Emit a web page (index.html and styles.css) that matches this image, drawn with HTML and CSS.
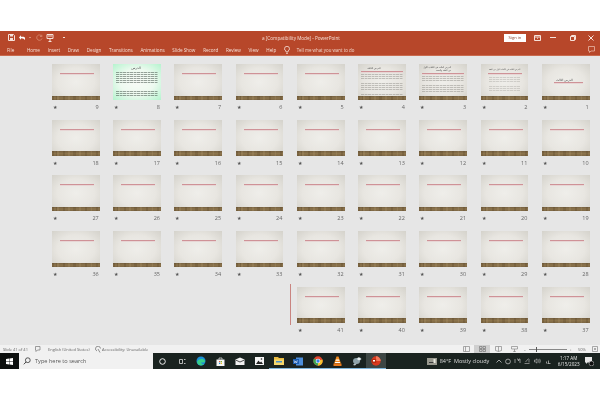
FILE: index.html
```html
<!DOCTYPE html>
<html lang="en">
<head>
<meta charset="utf-8">
<title>PowerPoint</title>
<link rel="stylesheet" href="styles.css">
</head>
<body>
<div class="screen">
  <header class="titlebar">
    <div class="qat">
      <svg width="7" height="7" viewBox="0 0 7 7"><path d="M.5.500h5l1 1v5h-6z" fill="none" stroke="#f6e2da"/><path d="M2 .5h3v2H2zM2 4h3v2.500H2z" fill="#f6e2da"/></svg>
      <svg width="8" height="7" viewBox="0 0 8 7"><path d="M1 3.500 3 1.300v1.400h2.400Q7.400 2.700 7 6 6 4.200 3 4.300v1.400z" fill="#fff"/></svg>
      <span class="caret"></span>
      <svg width="7" height="7" viewBox="0 0 7 7"><path d="M5.800 2.300A2.700 2.700 0 1 0 6 4.500M5.800.7v1.800H4" fill="none" stroke="#d98d74" stroke-width=".8"/></svg>
      <svg width="8" height="8" viewBox="0 0 8 8"><path d="M1 .5h6v4H1zM4 4.500v3M2.500 7.500h3" fill="none" stroke="#f6e2da"/><path d="M2 1.500h4v1H2z" fill="#f6e2da"/></svg>
      <span class="caret caret-more"></span>
    </div>
    <div class="doc-title">a ]Compatibility Mode] - PowerPoint</div>
    <div class="win">
      <span class="signin">Sign in</span>
      <svg width="7" height="6" viewBox="0 0 7 6"><path d="M.5.500h6v5h-6zM.5 2h6M3 3.200h1" fill="none" stroke="#f6e2da"/></svg>
      <svg width="6" height="1" viewBox="0 0 6 1"><path d="M0 .5h6" stroke="#f6e2da"/></svg>
      <svg width="6" height="6" viewBox="0 0 6 6"><path d="M.5 1.500h4v4h-4zM1.500 1.500v-1h4v4h-1" fill="none" stroke="#f6e2da"/></svg>
      <svg width="6" height="6" viewBox="0 0 6 6"><path d="M.5.500l5 5M5.500.500l-5 5" stroke="#f6e2da"/></svg>
    </div>
  </header>
  <nav class="tabs">
    <span>File</span><span>Home</span><span>Insert</span><span>Draw</span><span>Design</span><span>Transitions</span><span>Animations</span><span>Slide Show</span><span>Record</span><span>Review</span><span>View</span><span>Help</span>
    <svg class="bulb" width="6" height="8" viewBox="0 0 6 8"><path d="M2 6V5Q.5 4.200.5 2.800a2.500 2.500 0 0 1 5 0Q5.500 4.200 4 5v1zM2.200 7.500h1.600" fill="none" stroke="#f6e2da" stroke-width=".8"/></svg>
    <span class="tell">Tell me what you want to do</span>
    <svg class="comment" width="7" height="7" viewBox="0 0 7 7"><path d="M.5.500h6v4.500H3L1.500 6.500V5h-1z" fill="none" stroke="#e9b6a4" stroke-width=".8"/></svg>
  </nav>
  <main class="sorter">
    <div class="grid">
      <div class="cell"><div class="thumb"><b class="s1-title">الدرس الثالث</b><i class="rule rule-s1"></i><i class="band"></i></div><div class="meta"><em>★</em><span>1</span></div></div>
      <div class="cell"><div class="thumb"><b class="s2-title">الدرس الثالث في الكتاب الأول من الفقه</b><i class="rule rule-s2"></i><i class="lines lines-s2"></i><i class="band"></i></div><div class="meta"><em>★</em><span>2</span></div></div>
      <div class="cell"><div class="thumb"><b class="s3-title">الدرس الثالث في الكتاب الأول<br>من الفقه والسنة</b><i class="rule rule-s3"></i><i class="lines lines-s3"></i><i class="band"></i></div><div class="meta"><em>★</em><span>3</span></div></div>
      <div class="cell"><div class="thumb"><b class="s4-title">الدرس الثالث</b><i class="rule rule-s4"></i><i class="lines lines-s4"></i><i class="band"></i></div><div class="meta"><em>★</em><span>4</span></div></div>
      <div class="cell"><div class="thumb"><i class="rule"></i><i class="band"></i></div><div class="meta"><em>★</em><span>5</span></div></div>
      <div class="cell"><div class="thumb"><i class="rule"></i><i class="band"></i></div><div class="meta"><em>★</em><span>6</span></div></div>
      <div class="cell"><div class="thumb"><i class="rule"></i><i class="band"></i></div><div class="meta"><em>★</em><span>7</span></div></div>
      <div class="cell"><div class="thumb thumb-green"><b class="s8-title">الدرس</b><i class="lines lines-s8"></i></div><div class="meta"><em>★</em><span>8</span></div></div>
      <div class="cell"><div class="thumb"><i class="rule"></i><i class="band"></i></div><div class="meta"><em>★</em><span>9</span></div></div>
      <div class="cell"><div class="thumb"><i class="rule"></i><i class="band"></i></div><div class="meta"><em>★</em><span>10</span></div></div>
      <div class="cell"><div class="thumb"><i class="rule"></i><i class="band"></i></div><div class="meta"><em>★</em><span>11</span></div></div>
      <div class="cell"><div class="thumb"><i class="rule"></i><i class="band"></i></div><div class="meta"><em>★</em><span>12</span></div></div>
      <div class="cell"><div class="thumb"><i class="rule"></i><i class="band"></i></div><div class="meta"><em>★</em><span>13</span></div></div>
      <div class="cell"><div class="thumb"><i class="rule"></i><i class="band"></i></div><div class="meta"><em>★</em><span>14</span></div></div>
      <div class="cell"><div class="thumb"><i class="rule"></i><i class="band"></i></div><div class="meta"><em>★</em><span>15</span></div></div>
      <div class="cell"><div class="thumb"><i class="rule"></i><i class="band"></i></div><div class="meta"><em>★</em><span>16</span></div></div>
      <div class="cell"><div class="thumb"><i class="rule"></i><i class="band"></i></div><div class="meta"><em>★</em><span>17</span></div></div>
      <div class="cell"><div class="thumb"><i class="rule"></i><i class="band"></i></div><div class="meta"><em>★</em><span>18</span></div></div>
      <div class="cell"><div class="thumb"><i class="rule"></i><i class="band"></i></div><div class="meta"><em>★</em><span>19</span></div></div>
      <div class="cell"><div class="thumb"><i class="rule"></i><i class="band"></i></div><div class="meta"><em>★</em><span>20</span></div></div>
      <div class="cell"><div class="thumb"><i class="rule"></i><i class="band"></i></div><div class="meta"><em>★</em><span>21</span></div></div>
      <div class="cell"><div class="thumb"><i class="rule"></i><i class="band"></i></div><div class="meta"><em>★</em><span>22</span></div></div>
      <div class="cell"><div class="thumb"><i class="rule"></i><i class="band"></i></div><div class="meta"><em>★</em><span>23</span></div></div>
      <div class="cell"><div class="thumb"><i class="rule"></i><i class="band"></i></div><div class="meta"><em>★</em><span>24</span></div></div>
      <div class="cell"><div class="thumb"><i class="rule"></i><i class="band"></i></div><div class="meta"><em>★</em><span>25</span></div></div>
      <div class="cell"><div class="thumb"><i class="rule"></i><i class="band"></i></div><div class="meta"><em>★</em><span>26</span></div></div>
      <div class="cell"><div class="thumb"><i class="rule"></i><i class="band"></i></div><div class="meta"><em>★</em><span>27</span></div></div>
      <div class="cell"><div class="thumb"><i class="rule"></i><i class="band"></i></div><div class="meta"><em>★</em><span>28</span></div></div>
      <div class="cell"><div class="thumb"><i class="rule"></i><i class="band"></i></div><div class="meta"><em>★</em><span>29</span></div></div>
      <div class="cell"><div class="thumb"><i class="rule"></i><i class="band"></i></div><div class="meta"><em>★</em><span>30</span></div></div>
      <div class="cell"><div class="thumb"><i class="rule"></i><i class="band"></i></div><div class="meta"><em>★</em><span>31</span></div></div>
      <div class="cell"><div class="thumb"><i class="rule"></i><i class="band"></i></div><div class="meta"><em>★</em><span>32</span></div></div>
      <div class="cell"><div class="thumb"><i class="rule"></i><i class="band"></i></div><div class="meta"><em>★</em><span>33</span></div></div>
      <div class="cell"><div class="thumb"><i class="rule"></i><i class="band"></i></div><div class="meta"><em>★</em><span>34</span></div></div>
      <div class="cell"><div class="thumb"><i class="rule"></i><i class="band"></i></div><div class="meta"><em>★</em><span>35</span></div></div>
      <div class="cell"><div class="thumb"><i class="rule"></i><i class="band"></i></div><div class="meta"><em>★</em><span>36</span></div></div>
      <div class="cell"><div class="thumb"><i class="rule"></i><i class="band"></i></div><div class="meta"><em>★</em><span>37</span></div></div>
      <div class="cell"><div class="thumb"><i class="rule"></i><i class="band"></i></div><div class="meta"><em>★</em><span>38</span></div></div>
      <div class="cell"><div class="thumb"><i class="rule"></i><i class="band"></i></div><div class="meta"><em>★</em><span>39</span></div></div>
      <div class="cell"><div class="thumb"><i class="rule"></i><i class="band"></i></div><div class="meta"><em>★</em><span>40</span></div></div>
      <div class="cell"><i class="insert-mark"></i><div class="thumb"><i class="rule"></i><i class="band"></i></div><div class="meta"><em>★</em><span>41</span></div></div>
    </div>
  </main>
  <footer class="status">
    <span class="st-slide">Slide 41 of 41</span>
    <svg class="st-notes" width="7" height="6" viewBox="0 0 7 6"><path d="M.5.500h4.500v3.500H2.500L1 5.500V4H.5z" fill="none" stroke="#777" stroke-width=".7"/></svg>
    <span class="st-lang">English (United States)</span>
    <svg class="st-acc" width="6" height="7" viewBox="0 0 6 7"><path d="M5.500 2.500A2.500 2.500 0 1 0 2 5M3 3l2 3.500" fill="none" stroke="#666" stroke-width=".7"/></svg>
    <span class="st-acc-text">Accessibility: Unavailable</span>
    <div class="views">
      <span class="view"><svg width="7" height="6" viewBox="0 0 7 6"><path d="M.5.500h6v5h-6zM2.500.5v5" fill="none" stroke="#888" stroke-width=".7"/></svg></span>
      <span class="view view-on"><svg width="7" height="6" viewBox="0 0 7 6"><path d="M.5.500h2.500v2H.5zM4 .5h2.500v2H4zM.5 3.500h2.500v2H.5zM4 3.500h2.500v2H4z" fill="none" stroke="#777" stroke-width=".7"/></svg></span>
      <span class="view"><svg width="7" height="6" viewBox="0 0 7 6"><path d="M.5.500h6M3.500.5v5M.5.500v4l3 1 3-1v-4" fill="none" stroke="#888" stroke-width=".7"/></svg></span>
      <span class="view"><svg width="7" height="6" viewBox="0 0 7 6"><path d="M.5.500h6v2.500h-6zM3.500 3v3M2 5.700h3" fill="none" stroke="#888" stroke-width=".7"/></svg></span>
    </div>
    <div class="zoom">
      <span class="z-btn">-</span>
      <span class="z-track"><i class="z-thumb"></i></span>
      <span class="z-btn">+</span>
      <span class="z-pct">50%</span>
      <svg width="6" height="6" viewBox="0 0 6 6"><path d="M.5.500h5v5h-5z" fill="none" stroke="#888" stroke-width=".7"/><path d="M2 2h2v2H2z" fill="#aaa"/></svg>
    </div>
  </footer>
  <div class="taskbar">
    <div class="start"><svg width="7" height="7" viewBox="0 0 7 7"><path d="M0 .9 3.200.4v2.900H0zM3.600.4 7 0v3.300H3.600zM0 3.700h3.200v2.900L0 6.100zM3.600 3.700H7V7l-3.400-.5z" fill="#fff"/></svg></div>
    <div class="search">
      <svg width="8" height="8" viewBox="0 0 8 8"><circle cx="4.800" cy="3.200" r="2.400" fill="none" stroke="#333" stroke-width=".8"/><path d="M3 5 .8 7.300" stroke="#333" stroke-width=".9"/></svg>
      <span>Type here to search</span>
    </div>
    <div class="apps">
      <span class="app"><svg width="7" height="7" viewBox="0 0 7 7"><circle cx="3.500" cy="3.500" r="2.800" fill="none" stroke="#fff" stroke-width=".9"/></svg></span>
      <span class="app"><svg width="8" height="7" viewBox="0 0 8 7"><path d="M1.500 1.500h3v4h-3zM6 1.500h1.500M6 5.500h1.500" fill="none" stroke="#ddd" stroke-width=".8"/></svg></span>
      <span class="app"><svg width="10" height="10" viewBox="0 0 10 10"><circle cx="5" cy="5" r="4.500" fill="#1b8fd6"/><path d="M1 6C2 2.500 7.500 2 9 4.800 9.500 6.500 6.500 7 5 6 5.500 8 7 8.800 8.500 8 6 10.500 1.500 9.500 1 6z" fill="#38d08a"/></svg></span>
      <span class="app"><svg width="9" height="9" viewBox="0 0 9 9"><path d="M.5 2.500h8V9h-8z" fill="#f4f4f4"/><path d="M3 2.500V1h3v1.500" fill="none" stroke="#eee" stroke-width=".7"/><path d="M3 4h1.300v1.300H3z" fill="#e8543a"/><path d="M4.700 4H6v1.300H4.700z" fill="#7cb82f"/><path d="M3 5.700h1.300V7H3z" fill="#1f9be0"/><path d="M4.700 5.700H6V7H4.700z" fill="#f6b91c"/></svg></span>
      <span class="app"><svg width="10" height="8" viewBox="0 0 10 8"><path d="M.5 2.500 5 .5l4.500 2V8h-9z" fill="#f2f2f2"/><path d="M1 3.200 5 5l4-1.800" fill="none" stroke="#222" stroke-width=".8"/></svg></span>
      <span class="app"><svg width="9" height="8" viewBox="0 0 9 8"><path d="M0 0h9v8H0z" fill="#f4f4f4"/><path d="M1 7l2.500-3.500L5 5.500l1.200-1L8 7z" fill="#222"/><circle cx="6.500" cy="2" r=".8" fill="#222"/></svg></span>
      <span class="app app-run"><svg width="10" height="8" viewBox="0 0 10 8"><path d="M0 0h4l1 1h5v7H0z" fill="#e8b93f"/><path d="M0 2.500h10V8H0z" fill="#f6d76a"/><path d="M2 4h6v1.500H2z" fill="#4a90c8"/></svg></span>
      <span class="app app-run"><svg width="10" height="9" viewBox="0 0 10 9"><path d="M3 .5h7v8H3z" fill="#4d8fdc"/><path d="M0 2h6v5H0z" fill="#1b5cb0"/><path d="M1 3.200l.8 2.800.9-2 .9 2 .8-2.800" fill="none" stroke="#fff" stroke-width=".5"/></svg></span>
      <span class="app app-run"><svg width="10" height="10" viewBox="0 0 10 10"><circle cx="5" cy="5" r="4.700" fill="#e3462f"/><path d="M5 5 9.400 3.400A4.700 4.700 0 0 1 5 9.700z" fill="#f5c22d"/><path d="M5 5 5 9.700A4.700 4.700 0 0 1 1 2.600z" fill="#3aa655"/><circle cx="5" cy="5" r="2.300" fill="#fff"/><circle cx="5" cy="5" r="1.700" fill="#3b82e0"/></svg></span>
      <span class="app app-run"><svg width="9" height="10" viewBox="0 0 9 10"><path d="M3.500.5h2L8 7.500H1z" fill="#f28a1c"/><path d="M3 3.500h3l.5 1.300h-4zM2.200 6h4.600l.4 1H1.800z" fill="#fff"/><path d="M.5 7.500h8V10h-8z" fill="#e8791a"/></svg></span>
      <span class="app app-run"><svg width="10" height="10" viewBox="0 0 10 10"><path d="M1 9 8 1.500 9.500 3 3 9.500z" fill="#b8c4c8"/><ellipse cx="4.500" cy="5" rx="3.500" ry="3" fill="#8fa3aa"/><circle cx="6.800" cy="2.800" r="1.500" fill="#e9eff1"/></svg></span>
      <span class="app app-run app-active"><svg width="10" height="10" viewBox="0 0 10 10"><circle cx="5" cy="5" r="4.700" fill="#d8391f"/><path d="M5 5V.3A4.700 4.700 0 0 1 9.700 5z" fill="#f4785a"/><path d="M.8 3h4.400v4H.8z" fill="#b72c12"/><path d="M2 4h2v1.600H2z" fill="#fff"/></svg></span>
    </div>
    <div class="tray">
      <svg class="tr-weather" width="10" height="7" viewBox="0 0 10 7"><path d="M0 0h10v7H0z" fill="#9a9a90"/><path d="M2 4.500h6" stroke="#3a3a3a"/><path d="M6.500 1h2v4h-2z" fill="#e9e9e0"/></svg>
      <span class="tr-text">84°F&nbsp; Mostly cloudy</span>
      <svg class="tr-up" width="6" height="4" viewBox="0 0 6 4"><path d="M.5 3.500 3 1l2.500 2.500" fill="none" stroke="#ddd" stroke-width=".7"/></svg>
      <svg width="6" height="7" viewBox="0 0 6 7"><circle cx="3" cy="3.500" r="2.400" fill="none" stroke="#bbb" stroke-width=".8"/></svg>
      <svg width="7" height="6" viewBox="0 0 7 6"><path d="M1 5V1M3 1h1l.5 2 .5-2h1v4" fill="none" stroke="#bbb" stroke-width=".7"/></svg>
      <svg width="6" height="6" viewBox="0 0 6 6"><path d="M.5 5.500h5M1.500 4 4.500.5M5 1v3.500" fill="none" stroke="#aaa" stroke-width=".7"/></svg>
      <svg class="tr-vol" width="7" height="6" viewBox="0 0 7 6"><path d="M.5 2h1.200L3 .8v4.400L1.700 4H.5zM4.500 1.500q1 1.500 0 3M5.600.8q1.600 2.200 0 4.400" fill="none" stroke="#ccc" stroke-width=".6"/></svg>
      <svg class="tr-net" width="5" height="5" viewBox="0 0 5 5"><path d="M.5 4.500v-2M2.500 4.500V1.500M4.500 4.500h-3" fill="none" stroke="#ccc" stroke-width=".7"/></svg>
      <div class="clock"><span>1:17 AM</span><span>6/15/2023</span></div>
      <span class="notify"><svg width="9" height="9" viewBox="0 0 9 9"><path d="M0 0h7v5.500H2.500L1 7V5.500H0z" fill="#e6e6e6"/><circle cx="6.500" cy="6.500" r="2.400" fill="#111" stroke="#ddd" stroke-width=".5"/></svg></span>
    </div>
  </div>
</div>
</body>
</html>
```
FILE: styles.css
```css
* { box-sizing: border-box; }
html, body { margin: 0; background: #fff; }
svg { display: block; flex: none; }
.screen {
  width: 600px; height: 400px; padding: 31px 0; overflow: hidden;
  display: flex; flex-direction: column;
  font-family: "Open Sans", "Liberation Sans", sans-serif;
  filter: blur(.45px);
}

/* title + tabs */
.titlebar {
  height: 13px; flex: none; background: #b7472a; color: #f6dfd6;
  display: grid; grid-template-columns: 1fr auto 1fr; align-items: center;
  padding: 0 6px 0 8px; font-size: 4.650px;
}
.qat { display: flex; align-items: center; gap: 3px; }
.caret { width: 2px; height: 1px; background: #d98d74; margin-right: 2px; }
.caret-more { margin-left: 6px; background: #f6dfd6; }
.doc-title { white-space: nowrap; }
.win { display: flex; justify-content: flex-end; align-items: center; }
.signin {
  width: 22px; height: 8px; background: #fff; color: #8a4a38; font-size: 4.200px;
  display: flex; align-items: center; justify-content: center; margin-right: 8px;
}
.win svg:nth-of-type(1) { margin-right: 9px; }
.win svg:nth-of-type(2) { margin-right: 14px; }
.win svg:nth-of-type(3) { margin-right: 12px; }
.tabs {
  height: 12px; flex: none; background: #b7472a; color: #f6dfd6;
  display: flex; align-items: center; gap: 7.700px;
  padding: 0 5px 0 7px; font-size: 4.600px; white-space: nowrap;
  border-bottom: 1px solid #c96a4e;
}
.tabs span:first-child { margin-right: 5px; }
.bulb { margin-right: -1px; }
.tell { font-size: 4.400px; color: #f2d4c8; }
.comment { margin-left: auto; }

/* slide sorter */
.sorter { flex: 1; min-height: 0; background: #e6e6e6; padding: 8px 0 0 52px; }
.grid {
  direction: rtl;
  display: grid;
  width: max-content;
  grid-template-columns: repeat(9, 47.700px);
  grid-auto-rows: 55.700px;
  column-gap: 13.550px;
}
.cell { position: relative; direction: ltr; }
.thumb {
  position: relative; height: 36px; overflow: hidden;
  background: radial-gradient(ellipse at 50% 50%, #efeeea 0%, #e8e6e1 55%, #d4d2cb 100%);
}
.rule {
  position: absolute; left: 8px; top: 9px; width: 34px; height: 2px;
  background: linear-gradient(180deg, #cf9297 50%, #e7d6d5 50%);
}
.band {
  position: absolute; left: 0; right: 0; bottom: 0; height: 4.500px;
  background-color: #84704c;
  background-image:
    repeating-linear-gradient(90deg, rgba(70,50,25,.2) 0 2px, transparent 2px 5px, rgba(200,175,130,.16) 5px 7px, transparent 7px 11px),
    repeating-linear-gradient(90deg, transparent 0 4px, rgba(60,42,20,.16) 4px 5px, transparent 5px 17px),
    linear-gradient(180deg, #756040, #8c744c 50%, #7c6644);
}
.meta {
  height: 12px; margin-top: 1px; padding: 0 1px; display: flex; justify-content: space-between; align-items: center;
  font-size: 5.500px; color: #666;
}
.meta em { font-style: normal; font-size: 4.500px; color: #555; }
.insert-mark { position: absolute; left: -7px; top: -3px; width: 1px; height: 41px; background: #c98480; }

/* slides with content */
.thumb b {
  position: absolute; font-family: "DejaVu Sans", sans-serif; font-weight: 400; color: #444; white-space: nowrap; direction: rtl;
}
.lines {
  position: absolute;
  background: repeating-linear-gradient(180deg, #77756f 0 .7px, transparent .7px 2.200px);
  opacity: .38;
  -webkit-mask-image: repeating-linear-gradient(90deg, #000 0 3px, rgba(0,0,0,.35) 3px 4px, #000 4px 6px, rgba(0,0,0,.5) 6px 7px);
  mask-image: repeating-linear-gradient(90deg, #000 0 3px, rgba(0,0,0,.35) 3px 4px, #000 4px 6px, rgba(0,0,0,.5) 6px 7px);
}
.s1-title { left: 14px; top: 13.500px; font-size: 3px; color: #3a3a3a; }
.rule-s1 { left: 12px; top: 18px; width: 29px; }
.s2-title { left: 8px; top: 4px; font-size: 1.900px; }
.rule-s2 { left: 7px; top: 9px; width: 34px; }
.lines-s2 { left: 8px; right: 8px; top: 12.500px; height: 15px; opacity: .24; }
.s3-title { left: 4px; top: 2px; font-size: 2.200px; line-height: 3px; color: #333; }
.rule-s3 { left: 3px; top: 9px; width: 42px; }
.lines-s3 { left: 3px; right: 3px; top: 11.500px; height: 20px; }
.s4-title { left: 9px; top: 2.500px; font-size: 2.400px; color: #333; }
.rule-s4 { left: 3px; top: 7px; width: 42px; }
.lines-s4 { left: 3px; right: 3px; top: 9.500px; height: 21px; }
.thumb-green { background: radial-gradient(ellipse at 50% 50%, #f8fbf7 0%, #eefaf0 50%, #b5f3ce 100%); }
.s8-title { left: 18px; top: 1.500px; font-size: 3.400px; color: #3f5a48; }
.lines-s8 { left: 3px; right: 3px; top: 7.500px; height: 25px; background: repeating-linear-gradient(180deg, #3c4a42 0 .7px, transparent .7px 2.100px); opacity: .5; }

/* status bar */
.status {
  height: 8px; flex: none; background: #f1f1f1; color: #666; font-size: 4px;
  display: flex; align-items: center; white-space: nowrap; padding-left: 3px;
}
.st-slide { width: 32px; }
.st-notes { margin-right: 6px; }
.st-lang { width: 47px; }
.st-acc { margin-right: 1px; }
.views { display: flex; margin-left: auto; height: 100%; }
.view { width: 16px; display: flex; align-items: center; justify-content: center; }
.view-on { background: #cfcfcf; }
.zoom { display: flex; align-items: center; padding-right: 2px; }
.z-btn { width: 6px; text-align: center; }
.z-track { position: relative; width: 38px; height: 1px; background: #888; margin: 0 1px; }
.z-thumb { position: absolute; left: 6.500px; top: -2px; width: 1.500px; height: 5px; background: #555; }
.z-pct { width: 8px; margin: 0 6px 0 4px; }

/* taskbar */
.taskbar { height: 16px; flex: none; display: flex; background: #1a2320; color: #eee; }
.start { width: 19px; flex: none; background: #0c0f0e; display: flex; align-items: center; justify-content: center; }
.search {
  width: 134px; flex: none; background: #f1f1f1; color: #555; display: flex; align-items: center; gap: 4px;
  padding-left: 4px; font-size: 5.600px;
}
.apps { display: flex; flex: none; }
.app { width: 19.400px; display: flex; align-items: center; justify-content: center; }
.app-run { box-shadow: inset 0 -1px 0 #7fb6dc; }
.app-active { background: #3d4644; }
.tray { flex: 1; min-width: 0; display: flex; align-items: center; padding-left: 41px; gap: 3px; font-size: 5.500px; white-space: nowrap; }
.tr-text { width: 50px; margin-right: 3px; color: #ddd; }
.tr-vol { margin-left: 1px; }
.tr-net { margin-left: 2px; }
.clock { width: 22px; flex: none; margin-left: 4px; display: flex; flex-direction: column; align-items: center; font-size: 4.600px; line-height: 6.500px; color: #e8e8e8; }
.notify { margin-left: 2px; }
```
